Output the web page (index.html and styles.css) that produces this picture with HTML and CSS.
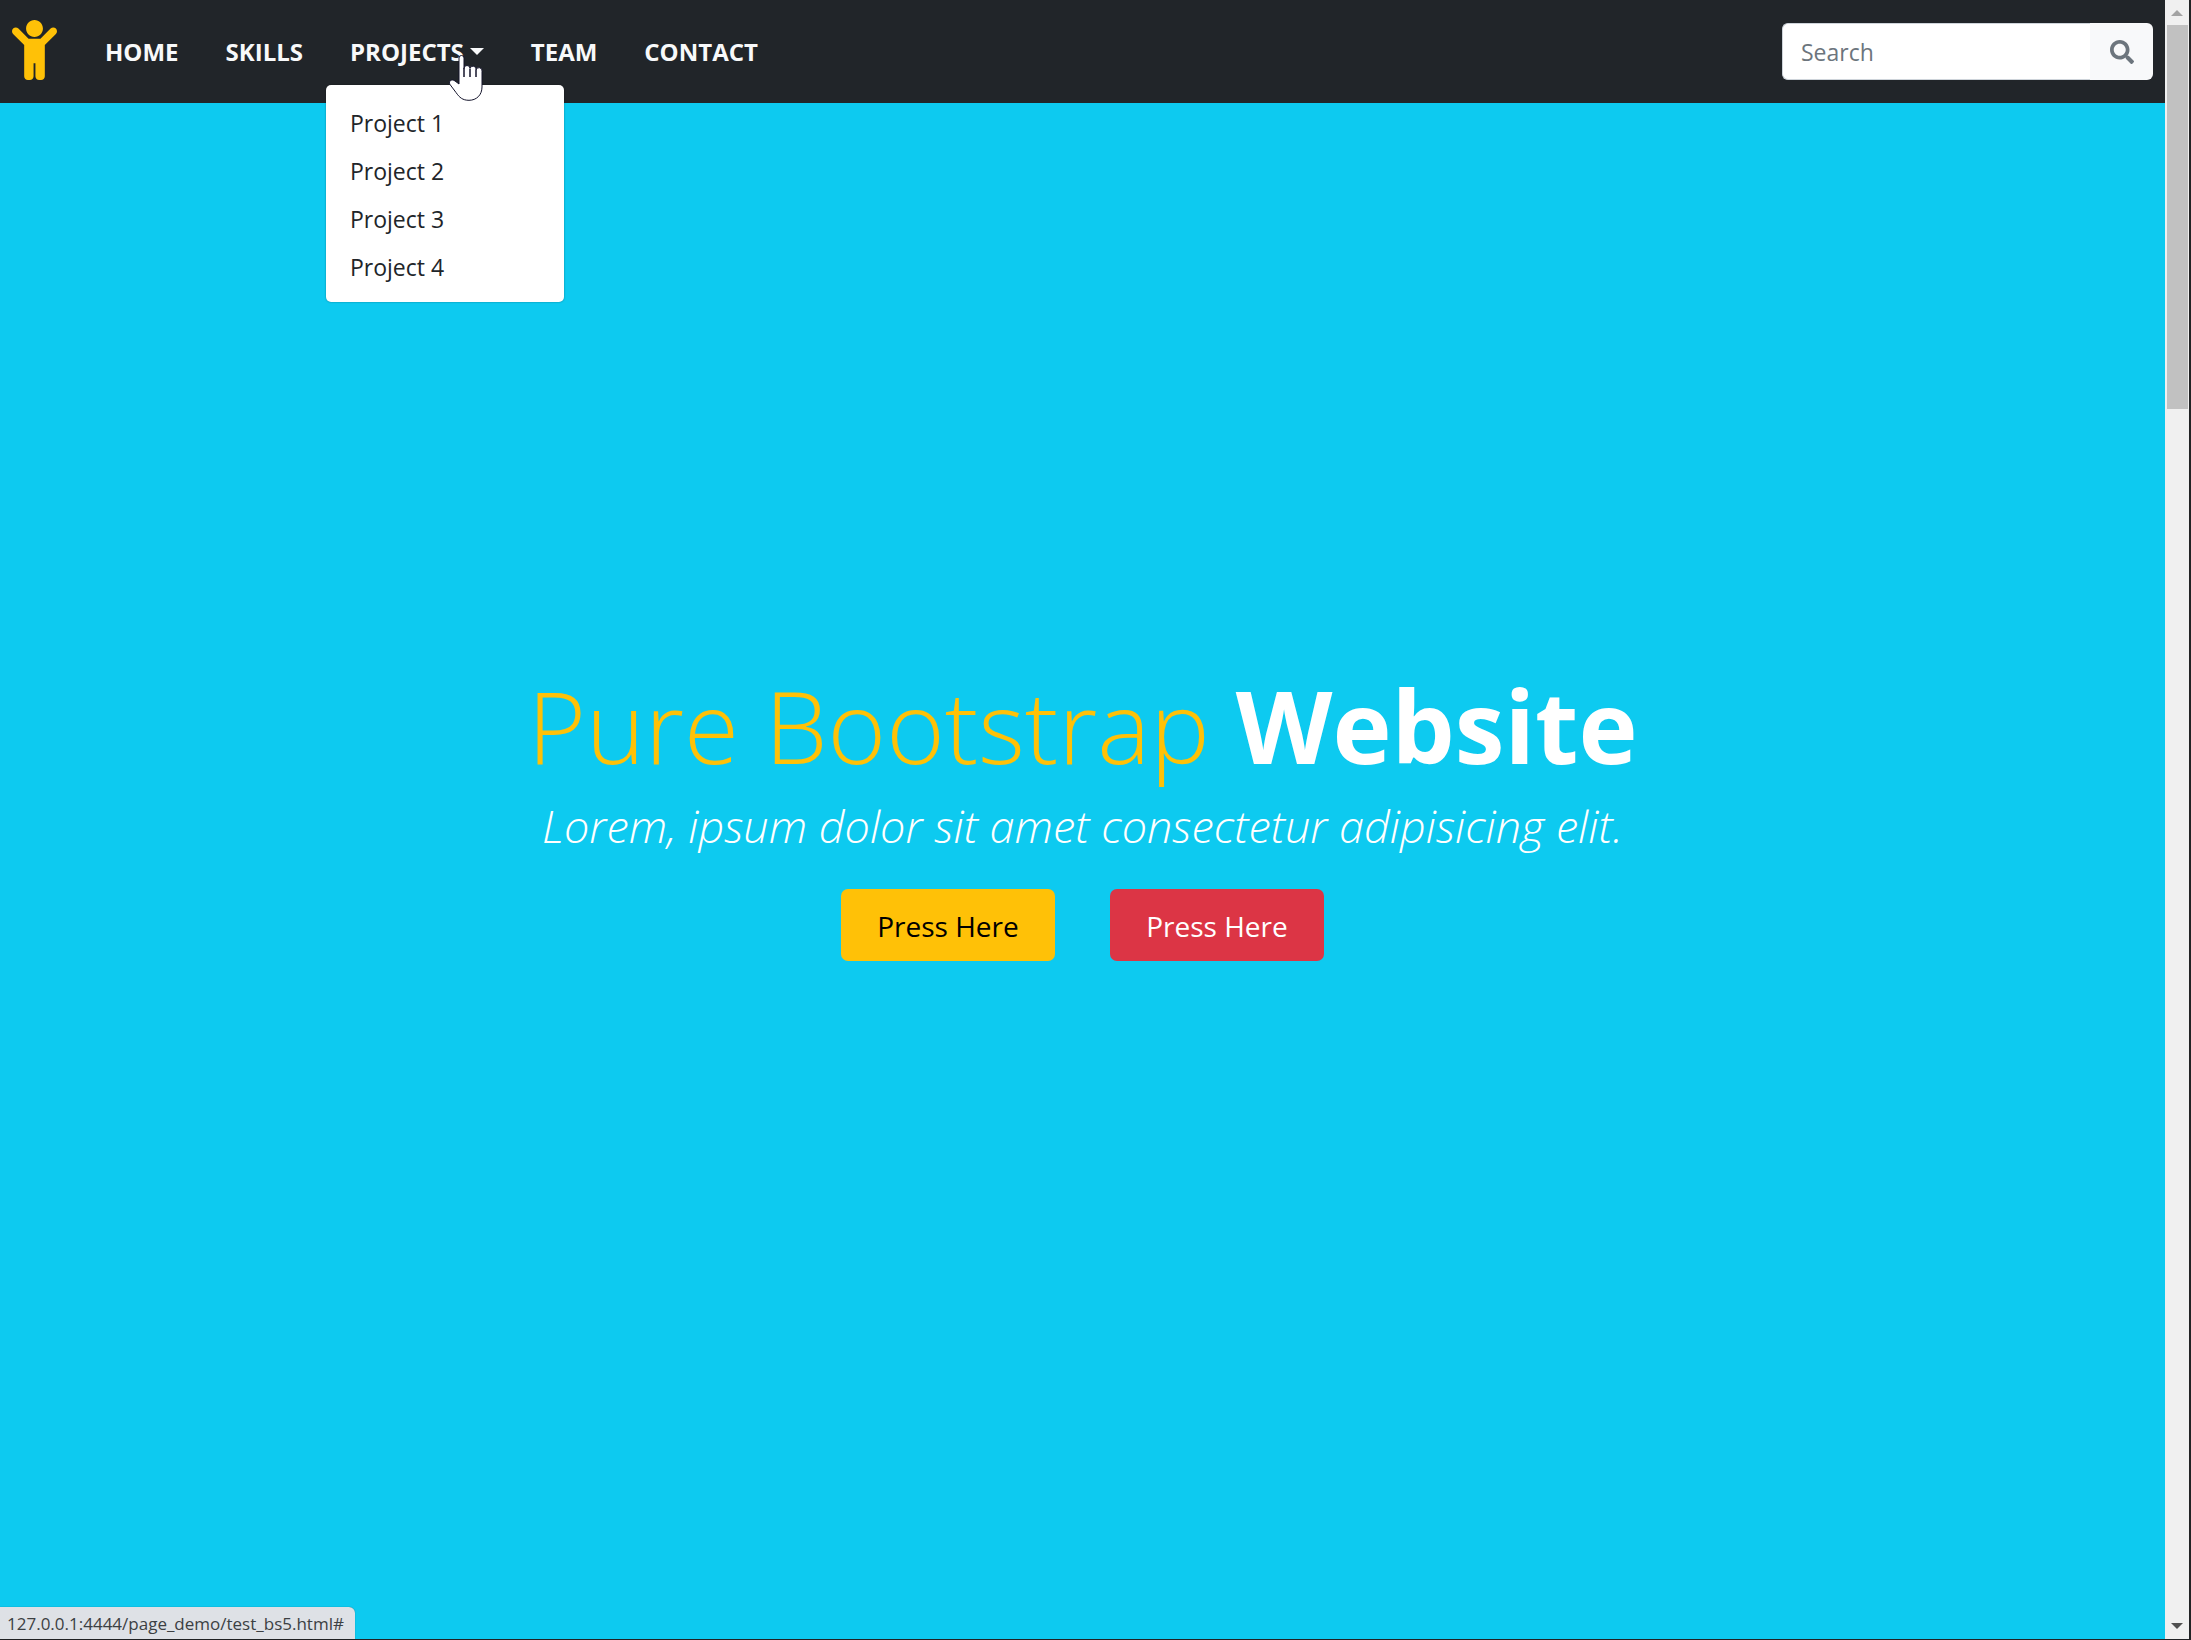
FILE: index.html
```html
<!DOCTYPE html>
<html lang="en">
<head>
<meta charset="utf-8">
<title>Pure Bootstrap Website</title>
<link rel="stylesheet" href="styles.css">
</head>
<body>
<div class="window">
  <div class="page">
    <header class="navbar">
      <a class="brand" href="#" aria-label="Home">
        <svg viewBox="0 0 384 512" width="45" height="60" fill="currentColor" aria-hidden="true"><path d="M120 72c0-39.765 32.235-72 72-72s72 32.235 72 72c0 39.764-32.235 72-72 72s-72-32.236-72-72zm254.627 1.373c-12.496-12.497-32.758-12.497-45.254 0L242.745 160H141.254L54.627 73.373c-12.496-12.497-32.758-12.497-45.254 0-12.497 12.497-12.497 32.758 0 45.255L104 213.254V480c0 17.673 14.327 32 32 32h16c17.673 0 32-14.327 32-32V368h16v112c0 17.673 14.327 32 32 32h16c17.673 0 32-14.327 32-32V213.254l94.627-94.627c12.497-12.496 12.497-32.757 0-45.254z"/></svg>
      </a>
      <nav class="menu">
        <a class="menu-link" href="#">HOME</a>
        <a class="menu-link" href="#">SKILLS</a>
        <div class="dropdown">
          <a class="menu-link menu-toggle" href="#">PROJECTS<span class="caret"></span></a>
          <div class="dropdown-menu">
            <a class="dropdown-item" href="#">Project 1</a>
            <a class="dropdown-item" href="#">Project 2</a>
            <a class="dropdown-item" href="#">Project 3</a>
            <a class="dropdown-item" href="#">Project 4</a>
          </div>
          <svg class="pointer" viewBox="0 0 34 46" width="34" height="46" aria-hidden="true"><path d="M10 3a2.500 2.500 0 0 1 5 0V13.500a2.800 2.800 0 0 1 6 0a2.800 2.800 0 0 1 6 1.500a2.800 2.800 0 0 1 6 1.500V32C33 40 27.500 45.300 20 45.300C13.500 45.300 10.500 42.500 7 37.500L1 29.500C-1 26 3 23.500 6 26L10 29Z" fill="#fff" stroke="#14142b"/><path d="M15 13V22M21 14V22M27 15V22" fill="none" stroke="#14142b" stroke-width="1.500"/></svg>
        </div>
        <a class="menu-link" href="#">TEAM</a>
        <a class="menu-link" href="#">CONTACT</a>
      </nav>
      <form class="search">
        <input class="search-input" type="search" placeholder="Search" aria-label="Search">
        <button class="search-button" type="button" aria-label="Submit search">
          <svg viewBox="0 0 512 512" width="24" height="24" fill="currentColor" aria-hidden="true"><path d="M505 442.7L405.300 343c-4.500-4.500-10.600-7-17-7H372c27.600-35.300 44-79.700 44-128C416 93.100 322.900 0 208 0S0 93.100 0 208s93.100 208 208 208c48.300 0 92.700-16.400 128-44v16.300c0 6.400 2.500 12.500 7 17l99.700 99.700c9.400 9.400 24.600 9.400 33.900 0l28.300-28.300c9.400-9.400 9.400-24.600.1-34zM208 336c-70.700 0-128-57.200-128-128 0-70.700 57.200-128 128-128 70.700 0 128 57.200 128 128 0 70.700-57.200 128-128 128z"/></svg>
        </button>
      </form>
    </header>
    <main class="hero">
      <h1 class="title"><span class="title-accent">Pure Bootstrap</span> <strong>Website</strong></h1>
      <p class="tagline">Lorem, ipsum dolor sit amet consectetur adipisicing elit.</p>
      <div class="actions">
        <button class="btn btn-warning" type="button">Press Here</button>
        <button class="btn btn-danger" type="button">Press Here</button>
      </div>
    </main>
    <div class="status">127.0.0.1:4444/page_demo/test_bs5.html#</div>
  </div>
  <div class="scrollbar" aria-hidden="true">
    <svg class="arrow arrow-up" viewBox="0 0 12 6" width="12" height="6"><path d="M0 6 6 0 12 6Z"/></svg>
    <div class="track"><div class="thumb"></div></div>
    <svg class="arrow arrow-down" viewBox="0 0 12 6" width="12" height="6"><path d="M0 0H12L6 6Z"/></svg>
  </div>
</div>
</body>
</html>
```
FILE: styles.css
```css
* { box-sizing: border-box; }

body {
  margin: 0;
  font-family: "Open Sans", "Noto Sans", sans-serif;
  font-size: 23px;
  line-height: 36px;
  color: #212529;
  background: #212325;
}

a { color: inherit; text-decoration: none; }
svg { display: block; }

.window {
  display: flex;
  height: 100vh;
  padding: 0 2px 1px 0;
}

.page {
  position: relative;
  flex: 1;
  display: flex;
  flex-direction: column;
  background: #0dcaf0;
}

.navbar {
  display: flex;
  align-items: center;
  height: 103px;
  padding: 0 12px;
  background: #212529;
}

.brand { color: #ffc107; margin-right: 24px; padding-bottom: 3px; }

.menu {
  display: flex;
  align-items: center;
  margin-right: auto;
  color: #f8f9fa;
  font-size: 24px;
  font-weight: 700;
}

.menu-link { display: block; padding: 12px 23px 12px 24px; }
.menu-toggle { display: flex; align-items: center; gap: 6px; }

.caret {
  border: 7px solid transparent;
  border-top-color: currentColor;
  border-bottom: 0;
}

.dropdown { position: relative; }

.dropdown-menu {
  position: absolute;
  top: 63px;
  left: 0;
  width: 238px;
  padding: 13px 2px 12px;
  border-radius: 5px;
  background: #fff;
  color: #212529;
  font-size: 23px;
  font-weight: 400;
  box-shadow: 0 0 2px rgba(0, 0, 0, 0.4);
}

.dropdown-item { display: block; padding: 7px 22px 5px; }

.pointer { position: absolute; top: 33px; left: 123px; }

.search { display: flex; height: 57px; }

.search-input {
  width: 308px;
  padding: 0 18px;
  border: 1px solid #ced4da;
  border-right: 0;
  border-radius: 6px 0 0 6px;
  background: #fff;
  font: inherit;
}

.search-input::placeholder { color: #6c757d; opacity: 1; }

.search-button {
  display: flex;
  align-items: center;
  justify-content: center;
  width: 63px;
  padding: 0;
  border: 0;
  border-radius: 0 6px 6px 0;
  background: #f8f9fa;
  color: #6c757d;
}

.hero {
  flex: 1;
  display: flex;
  flex-direction: column;
  align-items: center;
  justify-content: center;
  padding-bottom: 121px;
  color: #fff;
}

.title {
  margin: 0;
  font-size: 100px;
  line-height: 130px;
  font-weight: 300;
}

.title-accent { color: #ffc107; }
.title strong { font-weight: 700; }

.tagline {
  margin: 0 0 27px;
  font-size: 45px;
  line-height: 72px;
  font-weight: 300;
  font-style: italic;
}

.actions { display: flex; gap: 55px; }

.btn {
  width: 214px;
  height: 72px;
  padding: 2px 0 0;
  border: 0;
  border-radius: 7px;
  font: inherit;
  font-size: 28px;
}

.btn-warning { background: #ffc107; color: #000; }
.btn-danger { background: #dc3545; color: #fff; }

.status {
  position: absolute;
  left: 0;
  bottom: 0;
  padding: 1px 11px 0 7px;
  border-radius: 0 6px 0 0;
  background: #dee1e6;
  box-shadow: 0 0 1px rgba(0, 0, 0, 0.5);
  color: #3c4043;
  font-size: 17px;
  line-height: 31px;
}

.scrollbar {
  display: flex;
  flex-direction: column;
  align-items: center;
  width: 24px;
  padding: 10px 0;
  background: #f0f0f0;
}

.arrow-up { fill: #a3a3a3; }
.arrow-down { fill: #505050; }
.track { flex: 1; width: 21px; padding-top: 9px; }
.thumb { height: 24%; background: #c1c1c1; }
```
